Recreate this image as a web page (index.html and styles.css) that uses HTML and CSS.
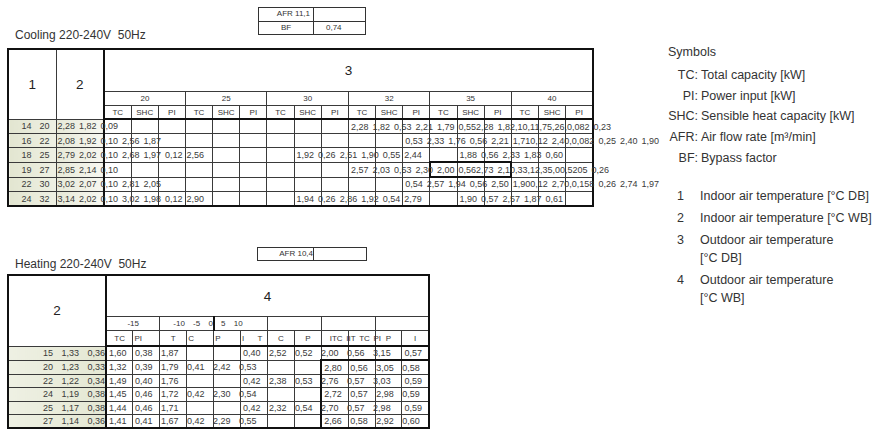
FILE: index.html
```html
<!DOCTYPE html>
<html>
<head>
<meta charset="utf-8">
<link rel="stylesheet" href="styles.css">
</head>
<body>
<div class="page">
  <div class="left">
    <div class="head head-cool">
      <div class="title">Cooling 220-240V  50Hz</div>
      <div class="afr afr-c">
        <span class="ar">AFR 11,1</span><span></span>
        <span>BF</span><span class="al">0,74</span>
      </div>
    </div>
    <table class="grid cool">
      <colgroup><col class="w48"><col class="w48"><col span="18"></colgroup>
      <tr class="hm"><td rowspan="3" class="big">1</td><td rowspan="3" class="big sep">2</td><td colspan="18" class="big">3</td></tr>
      <tr class="ht"><td colspan="3">20</td><td colspan="3">25</td><td colspan="3">30</td><td colspan="3">32</td><td colspan="3">35</td><td colspan="3">40</td></tr>
      <tr class="hs"><td>TC</td><td>SHC</td><td>PI</td><td>TC</td><td>SHC</td><td>PI</td><td>TC</td><td>SHC</td><td>PI</td><td>TC</td><td>SHC</td><td>PI</td><td>TC</td><td>SHC</td><td>PI</td><td>TC</td><td>SHC</td><td>PI</td></tr>
      <tr class="d"><td class="k1">14  20</td><td class="k2 sep">2,28 1,82 0,09</td><td></td><td></td><td></td><td></td><td></td><td></td><td></td><td></td><td></td><td>2,28 1,82 0,53 2,21 1,79 0,552,28 1,82,10,11,75,26,0,082 0,23</td><td></td><td></td><td></td><td></td><td></td><td></td><td></td><td></td></tr>
      <tr class="d"><td class="k1">16  22</td><td class="k2 sep">2,08 1,92 0,10 2,56 1,87</td><td></td><td></td><td></td><td></td><td></td><td></td><td></td><td></td><td></td><td></td><td></td><td>0,53 2,33 1,76 0,56 2,21 1,710,12 2,40,0,082 0,25 2,40 1,90</td><td></td><td></td><td></td><td></td><td></td><td></td></tr>
      <tr class="d"><td class="k1">18  25</td><td class="k2 sep">2,79 2,02 0,10 2,68 1,97 0,12 2,56</td><td></td><td></td><td></td><td></td><td></td><td></td><td></td><td>1,92 0,26 2,51 1,90 0,55 2,44</td><td></td><td></td><td></td><td></td><td></td><td>1,88 0,56 2,33 1,83 0,60</td><td></td><td></td><td></td><td></td></tr>
      <tr class="d"><td class="k1">19  27</td><td class="k2 sep">2,85 2,14 0,10</td><td></td><td></td><td></td><td></td><td></td><td></td><td></td><td></td><td></td><td>2,57 2,03 0,53 2,30 2,00 0,562,73 2,10,33,12,35,00,5205 0,26</td><td></td><td></td><td class="bx-l"></td><td class="bx-m"></td><td class="bx-r"></td><td></td><td></td><td></td></tr>
      <tr class="d"><td class="k1">22  30</td><td class="k2 sep">3,02 2,07 0,10 2,81 2,05</td><td></td><td></td><td></td><td></td><td></td><td></td><td></td><td></td><td></td><td></td><td></td><td>0,54 2,57 1,94 0,56 2,50 1,900,12 2,70,0,158 0,26 2,74 1,97</td><td></td><td></td><td></td><td></td><td></td><td></td></tr>
      <tr class="d"><td class="k1">24  32</td><td class="k2 sep">3,14 2,02 0,10 3,02 1,98 0,12 2,90</td><td></td><td></td><td></td><td></td><td></td><td></td><td></td><td>1,94 0,26 2,86 1,92 0,54 2,79</td><td></td><td></td><td></td><td></td><td></td><td>1,90 0,57 2,57 1,87 0,61</td><td></td><td></td><td></td><td></td></tr>
    </table>

    <div class="head head-heat">
      <div class="title">Heating 220-240V  50Hz</div>
      <div class="afr afr-h">
        <span class="ar">AFR 10,4</span><span></span>
      </div>
    </div>
    <table class="grid heat">
      <colgroup><col class="w98"><col span="12"></colgroup>
      <tr class="hm"><td rowspan="3" class="big sep">2</td><td colspan="12" class="big">4</td></tr>
      <tr class="ht"><td colspan="2">-15</td><td colspan="2" class="tl">-10 -5 0 5 10</td><td colspan="2" class="thk-l"></td><td colspan="2"></td><td colspan="2"></td><td colspan="2"></td></tr>
      <tr class="hs"><td>TC</td><td class="l1">PI</td><td>T</td><td class="l1">C</td><td class="l1">P</td><td class="l1">I      T</td><td>C</td><td>P</td><td class="l8">ITC IIT TC PI</td><td></td><td>P</td><td>I</td></tr>
      <tr class="d"><td class="k1 sep">15 1,33 0,36</td><td>1,60 0,38 1,87</td><td></td><td></td><td></td><td></td><td>0,40 2,52 0,52 2,00 0,56 3,15</td><td></td><td></td><td></td><td></td><td></td><td>0,57</td></tr>
      <tr class="d"><td class="k1 sep">20 1,23 0,33</td><td>1,32 0,39 1,79 0,41 2,42 0,53</td><td></td><td></td><td></td><td></td><td></td><td></td><td></td><td class="hb-tl">2,80 0,56 3,05 0,58</td><td class="hb-t"></td><td class="hb-t"></td><td class="hb-t"></td></tr>
      <tr class="d"><td class="k1 sep">22 1,22 0,34</td><td>1,49 0,40 1,76</td><td></td><td></td><td></td><td></td><td>0,42 2,38 0,53 2,76 0,57 3,03</td><td></td><td></td><td class="hb-l"></td><td></td><td></td><td>0,59</td></tr>
      <tr class="d"><td class="k1 sep">24 1,19 0,38</td><td>1,45 0,46 1,72 0,42 2,30 0,54</td><td></td><td></td><td></td><td></td><td></td><td></td><td></td><td class="hb-l">2,72 0,57 2,98 0,59</td><td></td><td></td><td></td></tr>
      <tr class="d"><td class="k1 sep">25 1,17 0,38</td><td>1,44 0,46 1,71</td><td></td><td></td><td></td><td></td><td>0,42 2,32 0,54 2,70 0,57 2,98</td><td></td><td></td><td class="hb-l"></td><td></td><td></td><td>0,59</td></tr>
      <tr class="d"><td class="k1 sep">27 1,14 0,36</td><td>1,41 0,41 1,67 0,42 2,29 0,55</td><td></td><td></td><td></td><td></td><td></td><td></td><td></td><td class="hb-l">2,66 0,58 2,92 0,60</td><td></td><td></td><td></td></tr>
    </table>
  </div>

  <div class="right">
    <div class="sym-title">Symbols</div>
    <div class="sym">
      <div class="lab">TC:</div><div>Total capacity [kW]</div>
      <div class="lab">PI:</div><div>Power input [kW]</div>
      <div class="lab">SHC:</div><div>Sensible heat capacity [kW]</div>
      <div class="lab">AFR:</div><div>Air flow rate [m³/min]</div>
      <div class="lab">BF:</div><div>Bypass factor</div>
    </div>
    <div class="legend">
      <div class="num">1</div><div class="nw">Indoor air temperature [°C DB]</div>
      <div class="num">2</div><div class="nw">Indoor air temperature [°C WB]</div>
      <div class="num">3</div><div>Outdoor air temperature<br>[°C DB]</div>
      <div class="num">4</div><div>Outdoor air temperature<br>[°C WB]</div>
    </div>
  </div>
</div>
</body>
</html>
```
FILE: styles.css
```css
body {
  margin: 0;
  font-family: "Liberation Sans", Arial, sans-serif;
  color: #222;
  background: #fff;
}
.page {
  display: flex;
  align-items: flex-start;
  width: 879px;
  height: 434px;
  overflow: hidden;
}
.left {
  flex: none;
  width: 640px;
  padding-left: 7px;
}
.head {
  display: grid;
  align-items: start;
}
.head-cool {
  grid-template-columns: 251px max-content;
  height: 48px;
}
.head-heat {
  grid-template-columns: 250px max-content;
  height: 67px;
}
.title {
  font-size: 12px;
  line-height: 14px;
  margin: 28px 0 0 8px;
  white-space: pre;
  color: #333;
}
.head-heat .title {
  margin-top: 50px;
}
.afr {
  display: grid;
  border-top: 1px solid #333;
  border-left: 1px solid #333;
  font-size: 8px;
  color: #333;
}
.afr span {
  border-right: 1px solid #333;
  border-bottom: 1px solid #333;
  line-height: 12px;
  text-align: center;
  white-space: nowrap;
}
.afr .ar { text-align: right; padding-right: 3px; }
.afr .al { text-align: left; padding-left: 12px; }
.afr-c {
  grid-template-columns: 55px 52px;
  grid-template-rows: 14px 13px;
  margin-top: 7px;
}
.afr-h {
  grid-template-columns: 56px 53px;
  grid-template-rows: 13px;
  margin-top: 40px;
}
.afr-h .ar { padding-right: 0; }

table.grid {
  border-collapse: collapse;
  table-layout: fixed;
  border: 2px solid #111;
}
table.cool { width: 587px; }
table.heat { width: 423px; }
col.w48 { width: 48px; }
col.w98 { width: 98px; }

.grid td {
  border: 1px solid #3a3a3a;
  padding: 0;
  white-space: pre;
  overflow: visible;
  font-size: 8px;
  line-height: 9px;
  text-align: center;
  color: #333;
}
.grid td.big {
  font-size: 13.5px;
  line-height: 15px;
  color: #222;
}
.grid td.sep { border-right: 2px solid #111; }
.grid .hs td { border-bottom: 2px solid #111; }
.cool .hm td { height: 41px; }
.cool .ht td { height: 13px; }
.cool .hs td { height: 12px; }
.heat .hm td { height: 40px; }
.heat .ht td { height: 13px; }
.heat .hs td { height: 14px; }

.grid .d td {
  text-align: left;
  padding-left: 2px;
  font-size: 9px;
  line-height: 10px;
  word-spacing: 1.5px;
  color: #3a3a3a;
}
.cool .d td { height: 13px; }
.heat .d td { height: 12.4px; word-spacing: 6px; }
.grid .d td.k1 {
  text-align: right;
  padding: 0 6px 0 0;
  background: linear-gradient(90deg, #e2e5d0, #eef0e3);
}
.grid .d td.k2 {
  padding-left: 1px;
  background: linear-gradient(90deg, #e7e9d8, #f7f7f0);
}
.heat .d td.k1 {
  padding-right: 0;
  background: linear-gradient(90deg, #eef0e3, #e4e7d3);
}
.grid td.tl { text-align: left; padding-left: 13px; word-spacing: 6px; }
.grid td.thk-l { border-left: 2px solid #111; }
.grid td.l1 { text-align: left; padding-left: 1px; }
.grid td.l8 { text-align: left; padding-left: 8px; word-spacing: 1.5px; }
.grid td.bx-l { border-top: 2px solid #111; border-bottom: 2px solid #111; border-left: 2px solid #111; }
.grid td.bx-m { border-top: 2px solid #111; border-bottom: 2px solid #111; }
.grid td.bx-r { border-top: 2px solid #111; border-bottom: 2px solid #111; border-right: 2px solid #111; }
.grid td.hb-tl { border-top: 2px solid #111; border-left: 2px solid #111; }
.grid td.hb-t { border-top: 2px solid #111; }
.grid td.hb-l { border-left: 2px solid #111; }

.right {
  flex: none;
  margin-left: 21px;
  padding-top: 42px;
  font-size: 12.5px;
  color: #333;
}
.sym-title {
  line-height: 20.8px;
  margin-bottom: 2px;
}
.sym {
  display: grid;
  grid-template-columns: 30px auto;
  column-gap: 3px;
  line-height: 20.8px;
}
.sym .lab { text-align: right; }
.legend {
  display: grid;
  grid-template-columns: 16px auto;
  column-gap: 16px;
  row-gap: 4px;
  line-height: 18px;
  margin-top: 18px;
}
.legend .num { text-align: right; }
.legend .nw { white-space: nowrap; }
```
